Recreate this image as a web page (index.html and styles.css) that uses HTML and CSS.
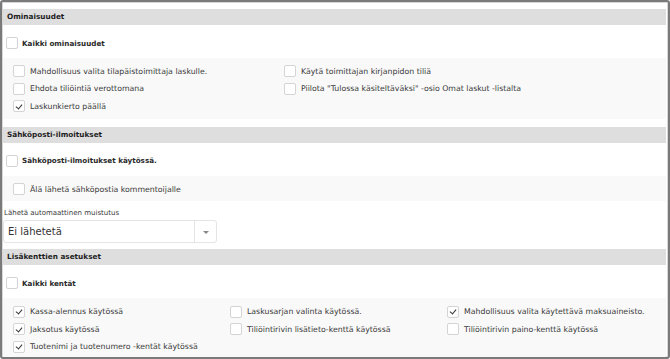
FILE: index.html
```html
<!DOCTYPE html>
<html lang="fi">
<head>
  <meta charset="UTF-8" />
  <meta name="viewport" content="width=device-width, initial-scale=1.0"/>
  <title>Asetukset</title>
  <link rel="stylesheet" href="styles.css">
</head>
<body>

<div class="frame">

  <div class="section">
    <div class="section-title">Ominaisuudet</div>
    <label class="check check-main"><span class="box"></span>Kaikki ominaisuudet</label>
    <div class="sub cols-2">
      <label class="check"><span class="box"></span>Mahdollisuus valita tilapäistoimittaja laskulle.</label>
      <label class="check"><span class="box"></span>Käytä toimittajan kirjanpidon tiliä</label>
      <label class="check"><span class="box"></span>Ehdota tiliöintiä verottomana</label>
      <label class="check"><span class="box"></span>Piilota "Tulossa käsiteltäväksi" -osio Omat laskut -listalta</label>
      <label class="check"><span class="box checked"></span>Laskunkierto päällä</label>
    </div>
  </div>

  <div class="section section-mail">
    <div class="section-title">Sähköposti-ilmoitukset</div>
    <label class="check check-main"><span class="box"></span>Sähköposti-ilmoitukset käytössä.</label>
    <div class="sub">
      <label class="check"><span class="box"></span>Älä lähetä sähköpostia kommentoijalle</label>
    </div>
    <div class="field">
      <div class="field-label">Lähetä automaattinen muistutus</div>
      <div class="select">
        <span class="select-value">Ei lähetetä</span>
        <span class="select-arrow"></span>
      </div>
    </div>
  </div>

  <div class="section section-fields">
    <div class="section-title">Lisäkenttien asetukset</div>
    <label class="check check-main"><span class="box"></span>Kaikki kentät</label>
    <div class="sub cols-3">
      <label class="check"><span class="box checked"></span>Kassa-alennus käytössä</label>
      <label class="check"><span class="box"></span>Laskusarjan valinta käytössä.</label>
      <label class="check"><span class="box checked"></span>Mahdollisuus valita käytettävä maksuaineisto.</label>
      <label class="check"><span class="box checked"></span>Jaksotus käytössä</label>
      <label class="check"><span class="box"></span>Tiliöintirivin lisätieto-kenttä käytössä</label>
      <label class="check"><span class="box"></span>Tiliöintirivin paino-kenttä käytössä</label>
      <label class="check"><span class="box checked"></span>Tuotenimi ja tuotenumero -kentät käytössä</label>
    </div>
  </div>

</div>

</body>
</html>
```

FILE: styles.css
```css
html, body {
  margin: 0;
  height: 100%;
}

body {
  font-family: 'DejaVu Sans', sans-serif;
  font-size: 7.8px;
  color: #3a3a3a;
  background: #fff;
}

.frame {
  box-sizing: border-box;
  height: 359px;
  border: 2px solid #7a7a7a;
  border-radius: 3px;
  padding: 7px 2px 0 1px;
  overflow: hidden;
  box-shadow: inset 0 0 0 1px #d8d8d8;
}

.section-title {
  background: #dedede;
  height: 16px;
  line-height: 16px;
  padding-left: 4px;
  font-size: 7.3px;
  font-weight: bold;
  color: #1e1e1e;
}

.check {
  display: flex;
  align-items: center;
  gap: 5px;
  height: 17.6px;
}

.check-main {
  gap: 4px;
  height: 12px;
  padding: 12px 0 9px 3px;
  font-size: 7.2px;
  font-weight: bold;
  color: #2a2a2a;
}

.box {
  box-sizing: border-box;
  width: 12px;
  height: 12px;
  flex: none;
  border: 1px solid #d4d4d4;
  border-radius: 2px;
  background: #fff;
  position: relative;
}

.box.checked::after {
  content: "";
  position: absolute;
  left: 3px;
  top: 1.5px;
  width: 3px;
  height: 5px;
  border: solid #333;
  border-width: 0 1.2px 1.2px 0;
  transform: rotate(40deg);
}

.sub {
  background: #f9f9f9;
  padding: 4.5px 10px 3.5px;
}

.cols-2 {
  display: grid;
  grid-template-columns: 271px 1fr;
}

.cols-3 {
  display: grid;
  grid-template-columns: 217px 217px 1fr;
}

.section {
  margin-bottom: 8px;
}

.section-mail {
  margin-bottom: 6px;
}

.field {
  padding-top: 7px;
}

.field-label {
  font-size: 7px;
  height: 12px;
  line-height: 11px;
  padding-left: 1px;
}

.select {
  display: flex;
  width: 214px;
  height: 23px;
  box-sizing: border-box;
  border: 1px solid #e4e4e4;
  border-radius: 3px;
  background: #fff;
}

.select-value {
  flex: 1;
  line-height: 21px;
  padding-left: 4px;
  font-size: 10px;
  color: #333;
}

.select-arrow {
  width: 21px;
  border-left: 1px solid #e4e4e4;
  position: relative;
}

.select-arrow::after {
  content: "";
  position: absolute;
  left: 8px;
  top: 10px;
  border: 3px solid transparent;
  border-top: 3px solid #888;
}
```
